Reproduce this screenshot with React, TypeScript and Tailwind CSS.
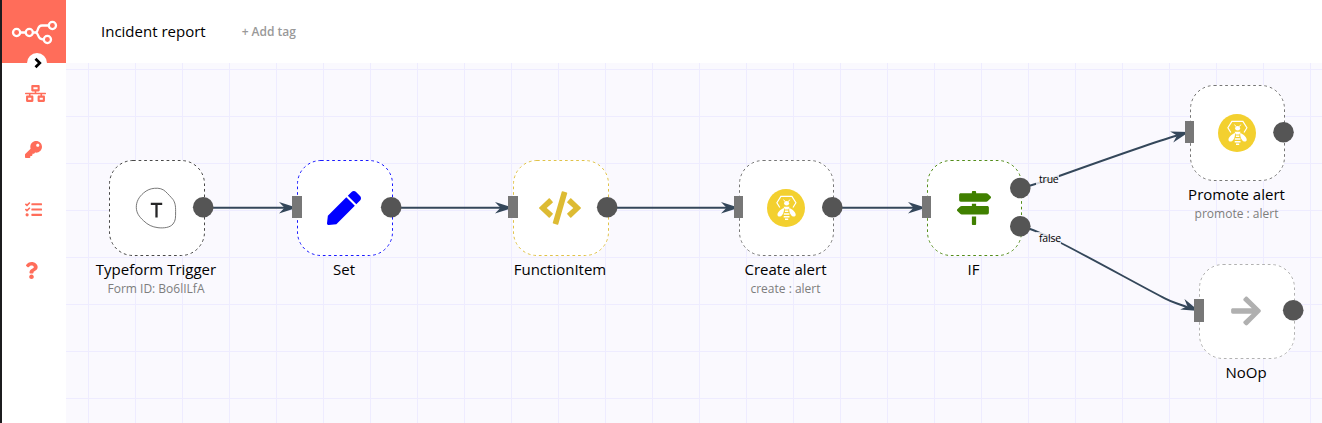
import React from 'react';
import { FaNetworkWired, FaKey, FaTasks, FaQuestion, FaPen, FaCode, FaMapSigns, FaArrowRight } from 'react-icons/fa';

const BeeIcon = () => (
  <svg viewBox="0 0 38 38" className="h-[38px] w-[38px]">
    <circle cx="19" cy="19" r="19" fill="#f3d02f" />
    <path d="M12.800 18.500 9.900 13.800 13.900 7.400h11l4 6.400-2.900 4.700" fill="none" stroke="#fff" strokeWidth="1.200" />
    <path d="m16.600 10.600 1.400 2m4.800-2-1.400 2" stroke="#fff" strokeWidth="1" />
    <ellipse cx="19.600" cy="14.300" rx="2.500" ry="2.200" fill="#fff" />
    <path d="M16.600 17.800h6l-1.200 2.700h-3.600z" fill="#fff" />
    <path d="M17 19c-3.300 1.200-6.800 4.500-6.500 7 .3 2 3.300 2 4.500.3 1.500-2 2.200-4.500 2-7.300zM22.200 19c3.300 1.200 6.800 4.500 6.500 7-.3 2-3.300 2-4.500.3-1.500-2-2.200-4.500-2-7.300z" fill="#fff" />
    <path d="M17.900 22.300h3.400M16.800 25h5.600M16.700 27.700h5.800M18 30.200h3.200" stroke="#fff" strokeWidth="1.600" />
  </svg>
);

const TypeformIcon = () => (
  <svg viewBox="0 0 42 42" className="h-[42px] w-[42px]">
    <path
      d="M19.500 1.300C24 .8 28 2 30.500 4.500c3 3 5 5 7.500 8 2 3 2.700 6 2.600 12 0 6 .2 9-2.600 12.500-3 3.600-9 4.300-15 3.700-6-.8-10-2.700-14.500-7C4 29.500 1.500 26 1.300 20.500 1.200 14.500 4 10 8.500 6 12 3 15.500 1.600 19.500 1.300z"
      fill="#fff" stroke="#555" strokeWidth=".8"
    />
    <path d="M15.800 16.800h11.400M21.500 16.800v13.600" stroke="#262627" strokeWidth="2.300" />
  </svg>
);

type NodeData = {
  name: string;
  sub?: string;
  box: string;
  w: number;
  h: number;
  border: string;
  label: string;
  icon: React.ReactNode;
};

const nodes: NodeData[] = [
  { name: 'Typeform Trigger', sub: 'Form ID: Bo6lILfA', box: 'left-[43px] top-[97px] h-[96px] w-[96px]', w: 96, h: 96, border: '#333', label: 'left-[-9px] top-[196px] w-[198px]', icon: <TypeformIcon /> },
  { name: 'Set', box: 'left-[231px] top-[97px] h-[96px] w-[96px]', w: 96, h: 96, border: '#0000ff', label: 'left-[179px] top-[196px] w-[198px]', icon: <FaPen size={34} color="#0000ff" /> },
  { name: 'FunctionItem', box: 'left-[447px] top-[97px] h-[96px] w-[96px]', w: 96, h: 96, border: '#ddbb33', label: 'left-[395px] top-[196px] w-[198px]', icon: <FaCode size={34} className="w-[42px]" color="#ddbb33" /> },
  { name: 'Create alert', sub: 'create : alert', box: 'left-[673px] top-[97px] h-[96px] w-[95px]', w: 95, h: 96, border: '#666', label: 'left-[621px] top-[196px] w-[197px]', icon: <BeeIcon /> },
  { name: 'IF', box: 'left-[861px] top-[97px] h-[96px] w-[95px]', w: 95, h: 96, border: '#408000', label: 'left-[809px] top-[196px] w-[197px]', icon: <FaMapSigns size={34} color="#408000" /> },
  { name: 'Promote alert', sub: 'promote : alert', box: 'left-[1124px] top-[22px] h-[96px] w-[95px]', w: 95, h: 96, border: '#666', label: 'left-[1072px] top-[121px] w-[197px]', icon: <BeeIcon /> },
  { name: 'NoOp', box: 'left-[1133px] top-[201px] h-[95px] w-[96px]', w: 96, h: 95, border: '#a8a8a8', label: 'left-[1081px] top-[299px] w-[198px]', icon: <FaArrowRight size={34} color="#b0b0b0" /> },
];

const Arrow = ({ x, y, angle = 0 }: { x: number; y: number; angle?: number }) => (
  <path d="M0 0-18-5.700-12.500 0-18 5.700z" transform={`translate(${x} ${y}) rotate(${angle})`} fill="#34475a" />
);

const Connections = () => (
  <svg viewBox="66 63 1256 360" className="absolute inset-0 h-[360px] w-[1256px]">
    <g fill="none" stroke="#34475a" strokeWidth="1.900">
      <path d="M203 207.700H285M391 207.700H501M607 207.700H727M832 207.700H915" />
      <path d="M1020 188C1031 186 1048 180 1062 175S1155 142 1177 135.500" />
      <path d="M1020 226C1036 229 1062 243 1123 276S1166 299 1187 307" />
    </g>
    <Arrow x={297} y={207.700} />
    <Arrow x={513} y={207.700} />
    <Arrow x={739} y={207.700} />
    <Arrow x={926} y={207.700} />
    <Arrow x={1189} y={132} angle={-16} />
    <Arrow x={1199} y={311} angle={22} />
  </svg>
);

const Endpoints = () => (
  <svg viewBox="66 63 1256 360" className="absolute inset-0 h-[360px] w-[1256px]">
    <g fill="#777">
      <path d="M292 196h10v22h-10zM508 196h10v22h-10zM734 196h9v22h-9zM922 196h9v22h-9zM1185 121h9v22h-9zM1194 299h10v23h-10z" />
    </g>
    <g fill="#555">
      <circle cx="203.200" cy="207.300" r="10.300" />
      <circle cx="391.200" cy="207.300" r="10.300" />
      <circle cx="607.200" cy="207.300" r="10.300" />
      <circle cx="832.300" cy="207.300" r="10.300" />
      <circle cx="1020.300" cy="188" r="10.300" />
      <circle cx="1020.300" cy="226.200" r="10.300" />
      <circle cx="1283.500" cy="132.200" r="10.300" />
      <circle cx="1293.200" cy="310.300" r="10.300" />
    </g>
  </svg>
);

const Sidebar = () => (
  <aside className="flex h-full w-[66px] shrink-0 border-l-2 border-[#1c1c1e] bg-white">
    <div className="flex w-16 flex-col">
      <div className="relative h-[63px] bg-[#ff6d5a]">
        <svg viewBox="2 0 64 63" className="h-[63px] w-16" fill="none" stroke="#fff" strokeWidth="2.300">
          <circle cx="16.600" cy="32.500" r="3.600" />
          <circle cx="29.300" cy="32.500" r="3.600" />
          <circle cx="52.400" cy="25.500" r="3.600" />
          <circle cx="47.400" cy="39.500" r="3.600" />
          <path d="M20.300 32.500h5.300M33 32.500h2.500C39 32 36.500 25.500 42 25.500h6.600M35.500 32.500C39.500 33 36.500 39.500 43.600 39.500" />
        </svg>
        <div className="absolute left-[25px] top-[53px] flex h-5 w-5 items-center justify-center rounded-full bg-white">
          <svg viewBox="0 0 20 20" className="h-5 w-5" fill="none" stroke="#000" strokeWidth="2.700"><path d="m8.500 5.700 4.300 4.300-4.300 4.300" /></svg>
        </div>
      </div>
      <nav className="flex flex-col items-start pl-[23px] text-[#ff6d5a]">
        <FaNetworkWired className="mt-[22px] h-[17px] w-[21px]" />
        <FaKey className="mt-[39px] h-[17px] w-[17px]" />
        <FaTasks className="mt-[43px] h-[17px] w-[17px]" />
        <FaQuestion className="mt-[44px] h-[17px] w-[13px]" />
      </nav>
    </div>
  </aside>
);

export default function App() {
  return (
    <div className="flex h-[423px] w-[1322px] overflow-hidden bg-white font-['Open_Sans',sans-serif] text-black">
      <Sidebar />
      <div className="flex flex-1 flex-col">
        <header className="flex h-[63px] items-center bg-white pl-[35px]">
          <span className="pb-0.5 text-[15px] leading-5">Incident report</span>
          <span className="ml-9 text-xs font-semibold text-[#999]">+ Add tag</span>
        </header>
        <main className="relative flex-1 overflow-hidden bg-[#faf9fe] bg-[linear-gradient(to_right,#eeecff_1px,transparent_1px),linear-gradient(to_bottom,#eeecff_1px,transparent_1px)] bg-[length:47px_47px] bg-[position:22px_6px]">
          {nodes.map((n) => (
            <React.Fragment key={n.name}>
              <div className={`absolute flex items-center justify-center rounded-[24px] bg-white pb-px pr-[2px] ${n.box}`}>
                {n.icon}
                <svg viewBox={`0 0 ${n.w} ${n.h}`} className="absolute inset-0 h-full w-full">
                  <rect x=".5" y=".5" width={n.w - 1} height={n.h - 1} rx="23.500" fill="none" stroke={n.border} strokeWidth=".9" strokeDasharray="2.700 2.900" />
                </svg>
              </div>
              <div className={`absolute flex flex-col items-center whitespace-nowrap ${n.label}`}>
                <span className="text-[15px] leading-5">{n.name}</span>
                {n.sub && <span className="text-xs leading-5 text-[#7d7d7d]">{n.sub}</span>}
              </div>
            </React.Fragment>
          ))}
          <Connections />
          <Endpoints />
          <span className="absolute left-[970px] top-[110px] bg-[#faf9fe]/80 pl-[3px] text-[10.5px] leading-[12px] tracking-[-0.2px]">true</span>
          <span className="absolute left-[970px] top-[169px] bg-[#faf9fe]/80 pl-[3px] text-[10.5px] leading-[12px] tracking-[-0.2px]">false</span>
        </main>
      </div>
    </div>
  );
}
